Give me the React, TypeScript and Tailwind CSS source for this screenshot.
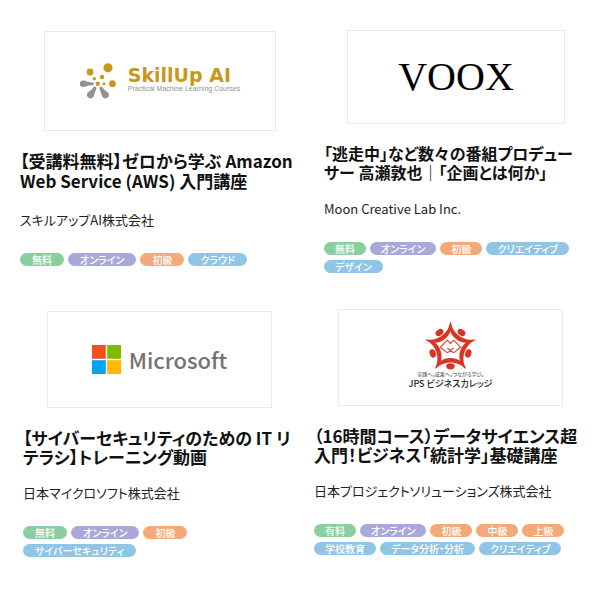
import type { ReactNode } from 'react';
import { clsx } from 'clsx';

type TagKind = 'price' | 'format' | 'level' | 'topic';

interface Tag {
  label: string;
  kind: TagKind;
}

interface Course {
  id: string;
  title: string;
  company: string;
  tags: Tag[];
  logo: ReactNode;
  cardClass: string;
  logoClass: string;
  titleClass: string;
  tagClass: string;
}

const tagColors: Record<TagKind, string> = {
  price: 'bg-[#8bcfa0]',
  format: 'bg-[#a9a8d9]',
  level: 'bg-[#f3a978]',
  topic: 'bg-[#90c5e5]',
};

function SkillUpLogo() {
  return (
    <div className="flex items-center gap-3">
      <svg viewBox="0 0 36 36" className="h-9 w-9" aria-hidden="true">
        <g fill="#c9981a">
          <circle cx="28" cy="4.8" r="4.6" />
          <circle cx="10" cy="9" r="3.4" />
          <circle cx="14.3" cy="15.7" r="1.7" />
          <circle cx="22" cy="14" r="2.2" />
          <circle cx="17.7" cy="20.7" r="2.2" />
          <circle cx="24" cy="20.7" r="1.5" />
          <circle cx="32.4" cy="20.7" r="3.4" />
        </g>
        <g fill="#929292">
          <path d="M3 17.6C5.5 17.6 7 19.4 12.5 19.4A1.4 1.4 0 0 1 12.5 22.2C7 22.2 5.5 24 3 24A3.2 3.2 0 0 1 3 17.6Z" />
          <path d="M16.4 25.2C15.6 28.5 14.8 29.5 14 32.5A3.6 3.6 0 1 1 7.8 29.4C10.2 27.8 11.7 27 13.2 24.5A1.7 1.7 0 0 1 16.4 25.2Z" />
          <path d="M19.4 25.2C20.2 28.5 21 29.5 21.8 32.5A3.6 3.6 0 1 0 28 29.4C25.6 27.8 24.1 27 22.6 24.5A1.7 1.7 0 0 0 19.4 25.2Z" />
        </g>
      </svg>
      <div className="flex flex-col pb-1">
        <span className="font-['DejaVu_Sans'] text-[19px] leading-[19px] font-bold text-[#c9981a]">
          SkillUp AI
        </span>
        <span className="font-['Liberation_Sans'] text-[7px] leading-[8px] text-[#929292]">
          Practical Machine Learning Courses
        </span>
      </div>
    </div>
  );
}

function VooxLogo() {
  return <span className="font-['Liberation_Serif'] text-[40px] leading-[40px] text-black">VOOX</span>;
}

function MicrosoftLogo() {
  return (
    <div className="flex items-center gap-2">
      <svg viewBox="0 0 29 29" className="size-[29px]" aria-hidden="true">
        <path fill="#f25022" d="M0 0h13.8v13.8H0z" />
        <path fill="#7fba00" d="M15.2 0H29v13.8H15.2z" />
        <path fill="#00a4ef" d="M0 15.2h13.8V29H0z" />
        <path fill="#ffb900" d="M15.2 15.2H29V29H15.2z" />
      </svg>
      <span className="text-[22px] leading-[29px] font-medium text-[#737373]">Microsoft</span>
    </div>
  );
}

const starAngles = [0, 72, 144, 216, 288];

function JpsLogo() {
  return (
    <div className="flex flex-col items-center pb-1">
      <svg viewBox="1 1 48 46" className="h-[49px] w-[51px]" aria-hidden="true">
        <g fill="#dc3323">
          {starAngles.map((angle) => (
            <g key={angle} transform={`rotate(${angle} 25 26)`}>
              <path d="M10.8 46.2C13.5 32.2 36.5 32.2 39.2 46.2C32 37.8 18 37.8 10.8 46.2Z" />
              <ellipse cx="25" cy="43.6" rx="4" ry="2.9" />
            </g>
          ))}
        </g>
        <g fill="none" stroke="#dc3323" strokeWidth="1">
          <path d="M22 31L15.5 25.5L22 19L25 22L28 19L34.5 25.5L28 31" />
          <path d="M22 26.5L28 31M28 26.5L22 31M22 26.5L25 28.5L28 26.5" />
        </g>
      </svg>
      <span className="text-[5px] leading-[8px] text-[#333]">実践へ。成果へ。つながる学び。</span>
      <span className="text-[9px] leading-[12px] font-medium text-[#222]">JPS ビジネスカレッジ</span>
    </div>
  );
}

const courses: Course[] = [
  {
    id: 'aws',
    title: '【受講料無料】ゼロから学ぶ Amazon\nWeb Service (AWS) 入門講座',
    company: 'スキルアップAI株式会社',
    tags: [
      { label: '無料', kind: 'price' },
      { label: 'オンライン', kind: 'format' },
      { label: '初級', kind: 'level' },
      { label: 'クラウド', kind: 'topic' },
    ],
    logo: <SkillUpLogo />,
    cardClass: 'pl-5 pt-[31px]',
    logoClass: 'ml-6 mr-6 h-[100px]',
    titleClass: 'mb-5 text-[17px] leading-[20px]',
    tagClass: 'px-3',
  },
  {
    id: 'planning',
    title: '「逃走中」など数々の番組プロデュー\nサー 高瀬敦也｜「企画とは何か」',
    company: 'Moon Creative Lab Inc.',
    tags: [
      { label: '無料', kind: 'price' },
      { label: 'オンライン', kind: 'format' },
      { label: '初級', kind: 'level' },
      { label: 'クリエイティブ', kind: 'topic' },
      { label: 'デザイン', kind: 'topic' },
    ],
    logo: <VooxLogo />,
    cardClass: 'pl-6 pt-[30px]',
    logoClass: 'ml-[23px] mr-[35px] h-[94px]',
    titleClass: 'mb-[18px] text-[16px] leading-[19px]',
    tagClass: 'px-[11px]',
  },
  {
    id: 'security',
    title: '【サイバーセキュリティのための IT リ\nテラシ】トレーニング動画',
    company: '日本マイクロソフト株式会社',
    tags: [
      { label: '無料', kind: 'price' },
      { label: 'オンライン', kind: 'format' },
      { label: '初級', kind: 'level' },
      { label: 'サイバーセキュリティ', kind: 'topic' },
    ],
    logo: <MicrosoftLogo />,
    cardClass: 'pl-[23px] pt-[38px]',
    logoClass: 'ml-6 mr-7 h-[97px]',
    titleClass: 'mb-[18px] text-[17px] leading-[19px]',
    tagClass: 'px-3',
  },
  {
    id: 'statistics',
    title: '（16時間コース）データサイエンス超\n入門！ビジネス「統計学」基礎講座',
    company: '日本プロジェクトソリューションズ株式会社',
    tags: [
      { label: '有料', kind: 'price' },
      { label: 'オンライン', kind: 'format' },
      { label: '初級', kind: 'level' },
      { label: '中級', kind: 'level' },
      { label: '上級', kind: 'level' },
      { label: '学校教育', kind: 'topic' },
      { label: 'データ分析・分析', kind: 'topic' },
      { label: 'クリエイティブ', kind: 'topic' },
    ],
    logo: <JpsLogo />,
    cardClass: 'pl-[14px] pt-9',
    logoClass: 'ml-6 mr-[37px] h-[97px]',
    titleClass: 'mb-[18px] text-[17px] leading-[19px]',
    tagClass: 'px-[11px]',
  },
];

function CourseCard({ course }: { course: Course }) {
  return (
    <article className={course.cardClass}>
      <div
        className={clsx(
          'flex items-center justify-center border border-[#ebebeb]',
          course.logoClass
        )}
      >
        {course.logo}
      </div>
      <h2 className={clsx('mt-5 font-bold whitespace-pre text-[#111]', course.titleClass)}>
        {course.title}
      </h2>
      <p className="text-[13px] leading-[18px] text-[#222]">{course.company}</p>
      <ul className="mt-6 flex flex-wrap gap-x-1 gap-y-[5px] pr-6">
        {course.tags.map((tag) => (
          <li
            key={tag.label}
            className={clsx(
              'rounded-full text-[10px] leading-[13px] font-medium text-white',
              course.tagClass,
              tagColors[tag.kind]
            )}
          >
            {tag.label}
          </li>
        ))}
      </ul>
    </article>
  );
}

export default function App() {
  return (
    <main
      lang="ja"
      className="grid min-h-screen grid-cols-2 content-start bg-white font-['Noto_Sans_CJK_JP',sans-serif] [font-feature-settings:'palt']"
    >
      {courses.map((course) => (
        <CourseCard key={course.id} course={course} />
      ))}
    </main>
  );
}
